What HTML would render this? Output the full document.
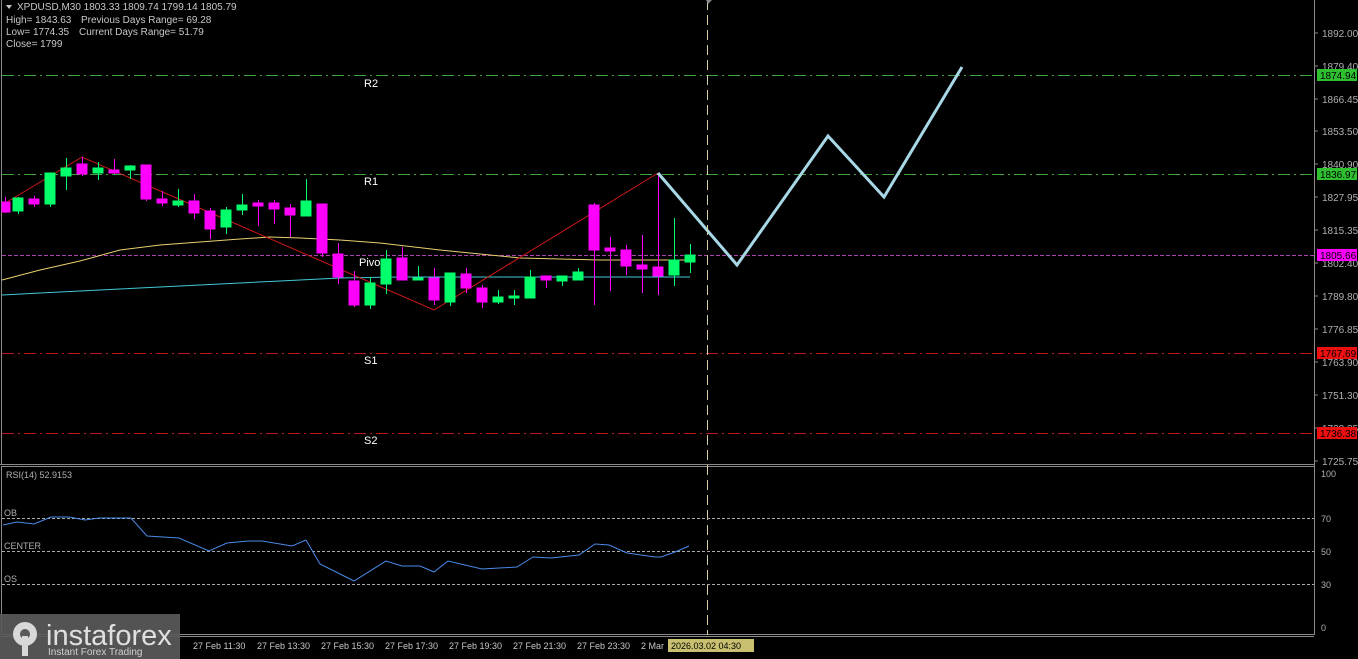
<!DOCTYPE html>
<html><head><meta charset="utf-8"><style>
html,body{margin:0;padding:0;background:#000;width:1358px;height:659px;overflow:hidden}
svg{display:block}
text{font-family:"Liberation Sans",sans-serif}
</style></head><body>
<svg width="1358" height="659" viewBox="0 0 1358 659" xmlns="http://www.w3.org/2000/svg">
<rect width="1358" height="659" fill="#000"/>
<g stroke="#8a8a8a" stroke-width="1" fill="none">
<line x1="1.5" y1="0" x2="1.5" y2="464"/>
<line x1="0" y1="464.5" x2="1314" y2="464.5"/>
<rect x="1.5" y="466.5" width="1313" height="168"/>
<line x1="1314.5" y1="0" x2="1314.5" y2="466"/>
<line x1="0" y1="636.5" x2="1314" y2="636.5"/>
</g>
<g stroke-width="1" fill="none">
<line x1="2" y1="75.5" x2="1314" y2="75.5" stroke="#3fa33f" stroke-dasharray="12,4,2,4"/>
<line x1="2" y1="174.5" x2="1314" y2="174.5" stroke="#3fa33f" stroke-dasharray="12,4,2,4"/>
<line x1="2" y1="255.5" x2="1314" y2="255.5" stroke="#b040b0" stroke-dasharray="4,2"/>
<line x1="2" y1="353.5" x2="1314" y2="353.5" stroke="#c01818" stroke-dasharray="12,4,2,4"/>
<line x1="2" y1="433.5" x2="1314" y2="433.5" stroke="#c01818" stroke-dasharray="12,4,2,4"/>
</g>
<g fill="#fff" font-size="11">
<text x="364" y="87">R2</text>
<text x="364" y="185">R1</text>
<text x="359" y="266">Pivot</text>
<text x="364" y="364">S1</text>
<text x="364" y="444">S2</text>
</g>
<polyline fill="none" stroke="#e8d070" stroke-width="1" points="2,280 40,270 80,261 120,250 160,245 200,242 240,239 270,237 300,238 340,240 380,243 440,250 480,254 520,258 560,259 600,260 690,260"/>
<polyline fill="none" stroke="#40c8d8" stroke-width="1" points="2,295 40,293 80,291 120,289 160,287 200,285 240,283 280,281 320,279 340,278 400,277 500,277 600,277 690,277"/>
<polyline fill="none" stroke="#d01818" stroke-width="1" points="2,205 82,157 434,310 658,173"/>
<g stroke-width="1">
<g stroke="#ff00ff" fill="#ff00ff">
<line x1="5.5" y1="197" x2="5.5" y2="213"/><rect x="2" y="202" width="8" height="10"/>
<line x1="34.5" y1="196" x2="34.5" y2="207"/><rect x="29" y="199" width="10" height="5"/>
<line x1="82.5" y1="157" x2="82.5" y2="176"/><rect x="77" y="164" width="10" height="10"/>
<line x1="114.5" y1="159" x2="114.5" y2="174"/><rect x="109" y="170" width="10" height="3"/>
<line x1="146.5" y1="165" x2="146.5" y2="201"/><rect x="141" y="165" width="10" height="34"/>
<line x1="162.5" y1="191" x2="162.5" y2="206"/><rect x="157" y="199" width="10" height="4"/>
<line x1="194.5" y1="194" x2="194.5" y2="219"/><rect x="189" y="201" width="10" height="12"/>
<line x1="210.5" y1="208" x2="210.5" y2="239"/><rect x="205" y="211" width="10" height="18"/>
<line x1="258.5" y1="200" x2="258.5" y2="226"/><rect x="253" y="203" width="10" height="3"/>
<line x1="274.5" y1="200" x2="274.5" y2="224"/><rect x="269" y="203" width="10" height="6"/>
<line x1="290.5" y1="204" x2="290.5" y2="237"/><rect x="285" y="208" width="10" height="7"/>
<line x1="322.5" y1="204" x2="322.5" y2="257"/><rect x="317" y="204" width="10" height="49"/>
<line x1="338.5" y1="243" x2="338.5" y2="284"/><rect x="333" y="254" width="10" height="23"/>
<line x1="354.5" y1="271" x2="354.5" y2="307"/><rect x="349" y="281" width="10" height="24"/>
<line x1="402.5" y1="247" x2="402.5" y2="280"/><rect x="397" y="258" width="10" height="22"/>
<line x1="434.5" y1="268" x2="434.5" y2="305"/><rect x="429" y="278" width="10" height="22"/>
<line x1="466.5" y1="268" x2="466.5" y2="293"/><rect x="461" y="274" width="10" height="14"/>
<line x1="482.5" y1="285" x2="482.5" y2="308"/><rect x="477" y="288" width="10" height="14"/>
<line x1="546.5" y1="276" x2="546.5" y2="288"/><rect x="541" y="276" width="10" height="4"/>
<line x1="594.5" y1="203" x2="594.5" y2="305"/><rect x="589" y="205" width="10" height="45"/>
<line x1="610.5" y1="237" x2="610.5" y2="291"/><rect x="605" y="248" width="10" height="3"/>
<line x1="626.5" y1="245" x2="626.5" y2="275"/><rect x="621" y="250" width="10" height="16"/>
<line x1="642.5" y1="235" x2="642.5" y2="293"/><rect x="637" y="265" width="10" height="4"/>
<line x1="658.5" y1="173" x2="658.5" y2="295"/><rect x="653" y="267" width="10" height="9"/>
</g>
<g stroke="#00ff6a" fill="#00ff6a">
<line x1="18.5" y1="197" x2="18.5" y2="214"/><rect x="13" y="198" width="10" height="13"/>
<line x1="50.5" y1="173" x2="50.5" y2="207"/><rect x="45" y="173" width="10" height="31"/>
<line x1="66.5" y1="158" x2="66.5" y2="190"/><rect x="61" y="168" width="10" height="8"/>
<line x1="98.5" y1="162" x2="98.5" y2="180"/><rect x="93" y="168" width="10" height="5"/>
<line x1="130.5" y1="165" x2="130.5" y2="179"/><rect x="125" y="166" width="10" height="4"/>
<line x1="178.5" y1="189" x2="178.5" y2="207"/><rect x="173" y="201" width="10" height="4"/>
<line x1="226.5" y1="207" x2="226.5" y2="234"/><rect x="221" y="210" width="10" height="17"/>
<line x1="242.5" y1="194" x2="242.5" y2="215"/><rect x="237" y="205" width="10" height="5"/>
<line x1="306.5" y1="179" x2="306.5" y2="216"/><rect x="301" y="201" width="10" height="15"/>
<line x1="370.5" y1="277" x2="370.5" y2="309"/><rect x="365" y="283" width="10" height="22"/>
<line x1="386.5" y1="250" x2="386.5" y2="294"/><rect x="381" y="259" width="10" height="25"/>
<line x1="418.5" y1="266" x2="418.5" y2="280"/><rect x="413" y="278" width="10" height="2"/>
<line x1="450.5" y1="273" x2="450.5" y2="306"/><rect x="445" y="273" width="10" height="29"/>
<line x1="498.5" y1="290" x2="498.5" y2="304"/><rect x="493" y="297" width="10" height="5"/>
<line x1="514.5" y1="290" x2="514.5" y2="305"/><rect x="509" y="296" width="10" height="2"/>
<line x1="530.5" y1="270" x2="530.5" y2="298"/><rect x="525" y="277" width="10" height="21"/>
<line x1="562.5" y1="276" x2="562.5" y2="286"/><rect x="557" y="276" width="10" height="5"/>
<line x1="578.5" y1="268" x2="578.5" y2="280"/><rect x="573" y="272" width="10" height="8"/>
<line x1="674.5" y1="218" x2="674.5" y2="286"/><rect x="669" y="260" width="10" height="15"/>
<line x1="690.5" y1="244" x2="690.5" y2="273"/><rect x="685" y="255" width="10" height="7"/>
</g>
</g>
<polyline fill="none" stroke="#a8d8e6" stroke-width="3" stroke-linejoin="miter" points="658,173 737,265 828,136 884,197 962,67"/>
<line x1="707.5" y1="0" x2="707.5" y2="635" stroke="#d8d0a0" stroke-width="1" stroke-dasharray="10,5"/>
<path d="M706 0 L712 0 L708 4 Z" fill="#888"/>
<g fill="#c8c8c8" font-size="10">
<path d="M6 5 L12 5 L9 9 Z" fill="#c8c8c8"/>
<text x="17" y="10">XPDUSD,M30  1803.33 1809.74 1799.14 1805.79</text>
<text x="6" y="23">High= 1843.63</text><text x="81" y="23">Previous Days Range= 69.28</text>
<text x="6" y="35">Low= 1774.35</text><text x="79" y="35">Current Days Range= 51.79</text>
<text x="6" y="47">Close= 1799</text>
</g>
<g fill="#b0b0b0" font-size="10">
<g stroke="#8a8a8a"><line x1="1314" y1="33" x2="1318" y2="33"/><line x1="1314" y1="66" x2="1318" y2="66"/><line x1="1314" y1="99" x2="1318" y2="99"/><line x1="1314" y1="131" x2="1318" y2="131"/><line x1="1314" y1="164" x2="1318" y2="164"/><line x1="1314" y1="197" x2="1318" y2="197"/><line x1="1314" y1="230" x2="1318" y2="230"/><line x1="1314" y1="263" x2="1318" y2="263"/><line x1="1314" y1="296" x2="1318" y2="296"/><line x1="1314" y1="329" x2="1318" y2="329"/><line x1="1314" y1="362" x2="1318" y2="362"/><line x1="1314" y1="395" x2="1318" y2="395"/><line x1="1314" y1="428" x2="1318" y2="428"/><line x1="1314" y1="461" x2="1318" y2="461"/></g>
<text x="1322" y="37">1892.00</text>
<text x="1322" y="70">1879.40</text>
<text x="1322" y="103">1866.45</text>
<text x="1322" y="135">1853.50</text>
<text x="1322" y="168">1840.90</text>
<text x="1322" y="201">1827.95</text>
<text x="1322" y="234">1815.35</text>
<text x="1322" y="267">1802.40</text>
<text x="1322" y="300">1789.80</text>
<text x="1322" y="333">1776.85</text>
<text x="1322" y="366">1763.90</text>
<text x="1322" y="399">1751.30</text>
<text x="1322" y="432">1738.35</text>
<text x="1322" y="465">1725.75</text>
</g>
<rect x="1317" y="69" width="40" height="12" fill="#2fc02f"/><text x="1320" y="79" font-size="10" fill="#000">1874.94</text>
<rect x="1317" y="168" width="40" height="12" fill="#2fc02f"/><text x="1320" y="178" font-size="10" fill="#000">1836.97</text>
<rect x="1317" y="249" width="40" height="12" fill="#ff00ff"/><text x="1320" y="259" font-size="10" fill="#000">1805.66</text>
<rect x="1317" y="347" width="40" height="12" fill="#ee1010"/><text x="1320" y="357" font-size="10" fill="#000">1767.69</text>
<rect x="1317" y="427" width="40" height="12" fill="#ee1010"/><text x="1320" y="437" font-size="10" fill="#000">1736.38</text>
<g stroke="#aaa" stroke-width="1" stroke-dasharray="3,2">
<line x1="2" y1="518.5" x2="1314" y2="518.5"/>
<line x1="2" y1="551.5" x2="1314" y2="551.5"/>
<line x1="2" y1="584.5" x2="1314" y2="584.5"/>
</g>
<g fill="#b0b0b0" font-size="9">
<text x="6" y="478">RSI(14) 52.9153</text>
<text x="4" y="516">OB</text>
<text x="4" y="549">CENTER</text>
<text x="4" y="582">OS</text>
</g>
<g fill="#b0b0b0" font-size="9">
<text x="1321" y="477">100</text><text x="1321" y="522">70</text><text x="1321" y="555">50</text><text x="1321" y="588">30</text><text x="1321" y="631">0</text>
</g>
<polyline fill="none" stroke="#4a8ae8" stroke-width="1" points="3,525 17,522 34,524 51,517 69,517 85,520 99,518 131,518 147,536 179,538 209,551 227,543 248,541 262,541 292,546 306,540 320,564 354,581 386,561 402,566 420,566 434,572 448,561 482,569 499,568 517,567 533,557 551,558 579,555 595,544 609,545 627,553 655,557 661,557 675,552 689,546"/>
<g fill="#c8c8c8" font-size="9">
<text x="193" y="649">27 Feb 11:30</text>
<text x="257" y="649">27 Feb 13:30</text>
<text x="321" y="649">27 Feb 15:30</text>
<text x="385" y="649">27 Feb 17:30</text>
<text x="449" y="649">27 Feb 19:30</text>
<text x="513" y="649">27 Feb 21:30</text>
<text x="577" y="649">27 Feb 23:30</text>
<text x="641" y="649">2 Mar</text>
</g>
<rect x="668" y="639" width="86" height="13" fill="#c8c070"/>
<text x="671" y="649" font-size="9" fill="#000">2026.03.02 04:30</text>
<rect x="0" y="614" width="180" height="45" fill="#5a5a5a" opacity="0.92"/>
<g fill="#d8d8d8">
<circle cx="25" cy="634" r="12"/>
<circle cx="25" cy="634" r="5" fill="#5a5a5a"/>
<rect x="22" y="636" width="6" height="20"/>
</g>
<text x="46" y="645" font-size="29" fill="#e0e0e0">instaforex</text>
<text x="48" y="655" font-size="10" fill="#d0d0d0">Instant Forex Trading</text>
</svg>
</body></html>
